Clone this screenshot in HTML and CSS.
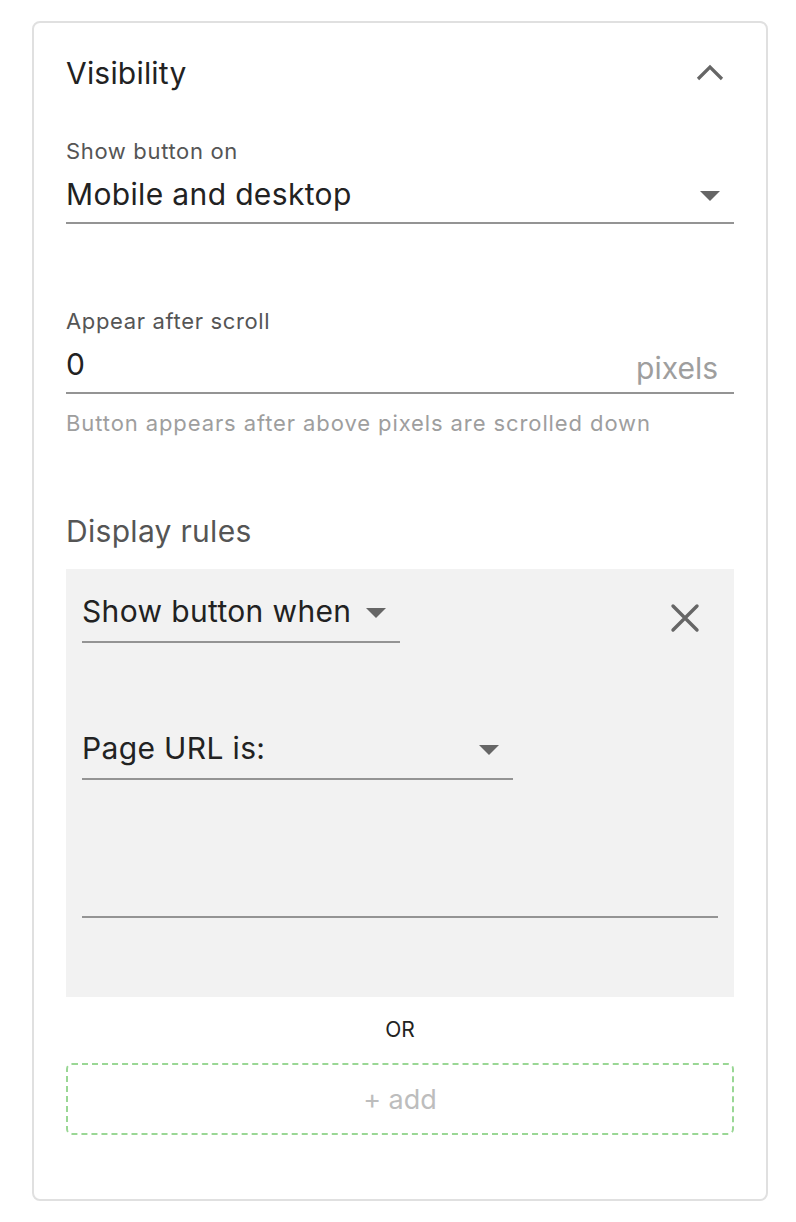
FILE: index.html
```html
<!DOCTYPE html>
<html>
<head>
<meta charset="utf-8">
<link rel="stylesheet" href="styles.css">
</head>
<body>
<div class="card">
  <div class="header">
    <div class="title">Visibility</div>
    <svg class="chevron" width="28" height="18" viewBox="0 0 28 18"><path d="M2 15 L14 3 L26 15" fill="none" stroke="#666" stroke-width="3.2"/></svg>
  </div>

  <div class="field field-select">
    <div class="label">Show button on</div>
    <div class="control">
      <span class="value">Mobile and desktop</span>
      <span class="caret"></span>
    </div>
  </div>

  <div class="field field-scroll">
    <div class="label">Appear after scroll</div>
    <div class="control">
      <span class="value">0</span>
      <span class="suffix">pixels</span>
    </div>
    <div class="helper">Button appears after above pixels are scrolled down</div>
  </div>

  <div class="section-title">Display rules</div>

  <div class="rule">
    <div class="rule-top">
      <div class="control small when">
        <span class="value">Show button when</span>
        <span class="caret"></span>
      </div>
      <svg class="close" width="30" height="30" viewBox="0 0 30 30"><path d="M3 3 L27 27 M27 3 L3 27" stroke="#666" stroke-width="3.4" stroke-linecap="round"/></svg>
    </div>
    <div class="control small url">
      <span class="value">Page URL is:</span>
      <span class="caret"></span>
    </div>
    <div class="control small empty"></div>
  </div>

  <div class="or">OR</div>
  <div class="add">+ add</div>
</div>
</body>
</html>
```

FILE: styles.css
```css
html, body {
  margin: 0;
  padding: 0;
  background: #fff;
}
body {
  padding: 21px 28px 20px 32px;
  font-family: Inter, Roboto, "Liberation Sans", sans-serif;
  color: #222;
}
.card {
  border: 2px solid #e0e0e0;
  border-radius: 8px;
  padding: 0 32px 64px 32px;
  box-sizing: border-box;
  width: 736px;
  height: 1180px;
}
.header {
  display: flex;
  align-items: center;
  justify-content: space-between;
  height: 100px;
}
.title {
  font-size: 30px;
  letter-spacing: 0.2px;
  color: #222;
  line-height: 100px;
}
.chevron {
  margin-right: 10px;
}
.field {
  display: flex;
  flex-direction: column;
}
.label {
  font-size: 22px;
  color: #555;
  line-height: 30px;
  letter-spacing: 0.65px;
}
.control {
  display: flex;
  align-items: center;
  justify-content: space-between;
  border-bottom: 2px solid #949494;
  height: 62px;
  box-sizing: border-box;
}
.field .control {
  height: 58px;
}
.value {
  font-size: 30px;
  letter-spacing: 0.35px;
  color: #222;
}
.caret {
  width: 0;
  height: 0;
  border-left: 10px solid transparent;
  border-right: 10px solid transparent;
  border-top: 10px solid #666;
  margin-right: 14px;
  margin-top: 4px;
}
.field-select {
  margin-top: 13px;
}
.field-scroll {
  margin-top: 82px;
}
.suffix {
  font-size: 30px;
  color: #9e9e9e;
  margin-right: 16px;
  padding-top: 8px;
}
.helper {
  font-size: 22px;
  color: #9e9e9e;
  letter-spacing: 0.9px;
  line-height: 30px;
  margin-top: 14px;
}
.section-title {
  font-size: 30px;
  letter-spacing: 0.3px;
  color: #555;
  margin-top: 73px;
  line-height: 40px;
}
.rule {
  background: #f2f2f2;
  margin-top: 18px;
  height: 428px;
  box-sizing: border-box;
  padding: 12px 16px 0 16px;
  display: flex;
  flex-direction: column;
}
.rule-top {
  display: flex;
  justify-content: space-between;
  align-items: flex-start;
}
.when {
  width: 318px;
}
.close {
  margin-top: 22px;
  margin-right: 18px;
}
.url {
  width: 431px;
  margin-top: 75px;
}
.empty {
  margin-top: 76px;
  width: 636px;
}
.or {
  text-align: center;
  font-size: 21px;
  color: #222;
  line-height: 30px;
  margin-top: 18px;
}
.add {
  margin-top: 18px;
  height: 72px;
  box-sizing: border-box;
  border: 2px dashed #9ad795;
  border-radius: 6px;
  display: flex;
  align-items: center;
  justify-content: center;
  font-size: 27px;
  color: #bdbdbd;
}
```
